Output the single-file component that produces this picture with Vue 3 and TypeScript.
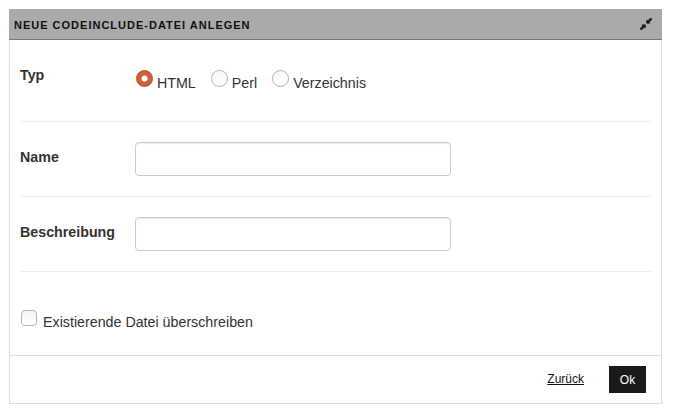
<script setup lang="ts">
const types: { label: string; checked: boolean }[] = [
  { label: 'HTML', checked: true },
  { label: 'Perl', checked: false },
  { label: 'Verzeichnis', checked: false },
]
</script>

<template>
  <div class="dialog">
    <header class="head">
      <span class="title">Neue CodeInclude-Datei anlegen</span>
      <svg class="shrink" width="12" height="12" viewBox="0 0 12 12" aria-hidden="true">
        <path d="M11.6 .4 8 4" stroke="#16263c" stroke-width="2.6" fill="none" />
        <path d="M6.4 1.6v4h4z" fill="#0c0c0c" />
        <path d="M.4 11.6 4 8" stroke="#2c2414" stroke-width="2.6" fill="none" />
        <path d="M5.6 10.4v-4h-4z" fill="#0c0c0c" />
      </svg>
    </header>
    <div class="body">
      <div class="row row-typ">
        <div class="label">Typ</div>
        <div class="radios">
          <div v-for="t in types" :key="t.label" class="radio-item">
            <span class="radio" :class="{ on: t.checked }"></span>
            <span class="opt">{{ t.label }}</span>
          </div>
        </div>
      </div>
      <div class="row row-field">
        <div class="label">Name</div>
        <div class="input"></div>
      </div>
      <div class="row row-field">
        <div class="label">Beschreibung</div>
        <div class="input"></div>
      </div>
      <div class="check-row">
        <span class="check"></span>
        <span class="opt">Existierende Datei überschreiben</span>
      </div>
    </div>
    <footer class="foot">
      <a class="back">Zurück</a>
      <button class="ok" type="button">Ok</button>
    </footer>
  </div>
</template>

<style>
html, body { margin: 0; background: #fff; }
</style>

<style scoped>
.dialog {
  box-sizing: border-box;
  width: 653px;
  height: 395px;
  margin: 9px 0 0 9px;
  border: 1px solid #ddd;
  border-top: 0;
  display: flex;
  flex-direction: column;
  font-family: "Liberation Sans", Arial, sans-serif;
  font-size: 14.25px;
  color: #333;
}
.head {
  box-sizing: border-box;
  height: 31px;
  margin: 0 -1px;
  padding: 0 10px 0 5px;
  background: #aaa;
  border-bottom: 1px solid #777;
  display: flex;
  align-items: center;
  justify-content: space-between;
}
.title {
  padding-top: 1px;
  font-size: 11px;
  font-weight: 700;
  letter-spacing: 1px;
  text-transform: uppercase;
  color: #111;
}
.shrink { display: block; }
.body {
  flex: 1;
  padding: 0 10px;
}
.row {
  display: flex;
  border-bottom: 1px solid #eee;
  box-sizing: border-box;
}
.row-typ { height: 82px; padding-top: 27px; }
.row-field { height: 75px; padding-top: 20px; }
.label {
  width: 115px;
  font-weight: 700;
  line-height: 16px;
  padding-top: 7px;
}
.row-typ .label { padding-top: 0; }
.radios { display: flex; gap: 15px; }
.radio-item { display: flex; align-items: flex-start; gap: 4px; }
.radio {
  box-sizing: border-box;
  width: 17px;
  height: 17px;
  margin-top: 3px;
  border: 1px solid #b4b4b4;
  border-radius: 50%;
  background: linear-gradient(#f9f9f9, #fff);
}
.radio-item:first-child .radio { margin-left: 1px; }
.radio.on {
  border: 1px solid #b5532a;
  background: radial-gradient(circle, #fff 0 2.6px, #d0643a 3.4px, #c45a32 100%);
}
.opt { line-height: 16px; padding-top: 8px; }
.input {
  box-sizing: border-box;
  width: 316px;
  height: 34px;
  border: 1px solid #ccc;
  border-radius: 4px;
  background: #fff;
  box-shadow: inset 0 1px 1px rgba(0, 0, 0, .075);
}
.check-row {
  display: flex;
  align-items: flex-start;
  gap: 6px;
  padding: 38px 0 0 1px;
}
.check {
  box-sizing: border-box;
  width: 16px;
  height: 16px;
  border: 1px solid #b4b4b4;
  border-radius: 4px;
  background: linear-gradient(#f5f5f5, #fff);
}
.check-row .opt { padding-top: 4px; }
.foot {
  box-sizing: border-box;
  height: 48px;
  border-top: 1px solid #ddd;
  padding: 10px 15px 0 0;
  display: flex;
  justify-content: flex-end;
  align-items: flex-start;
  gap: 25px;
}
.back {
  font-size: 12px;
  line-height: 27px;
  color: #111;
  text-decoration: underline;
}
.ok {
  box-sizing: border-box;
  width: 37px;
  height: 27px;
  padding: 0;
  border: 0;
  background: #1a1a1a;
  color: #fff;
  font: 12px "Liberation Sans", Arial, sans-serif;
}
</style>
